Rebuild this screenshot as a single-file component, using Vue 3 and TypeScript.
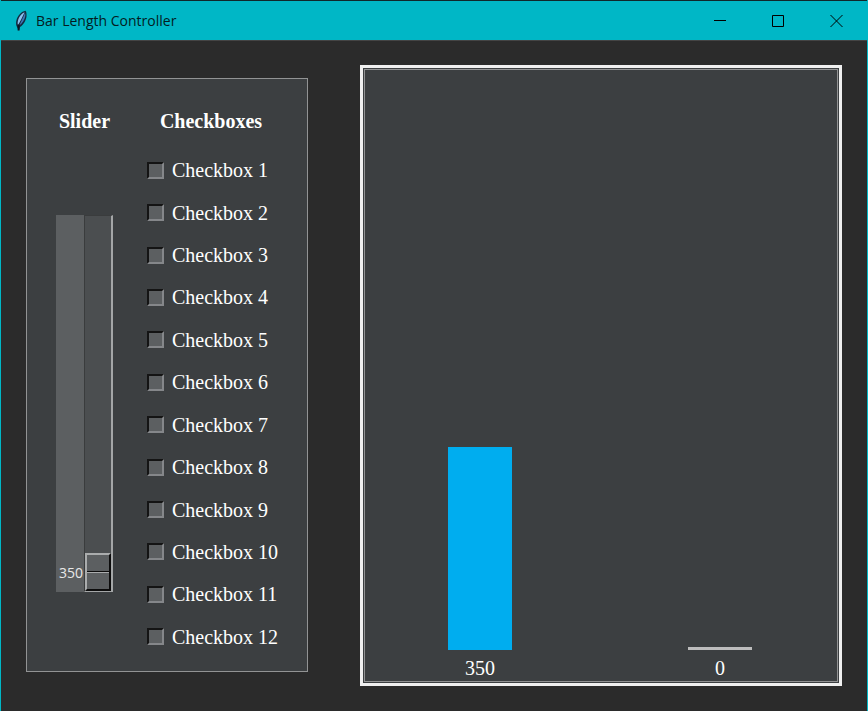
<script setup lang="ts">
import { computed, ref } from 'vue'

interface Option {
  id: number
  checked: boolean
}

const SCALE_MIN = 350
const SCALE_MAX = 1000

const level = ref<number>(350)
const options = ref<Option[]>(
  Array.from({ length: 12 }, (_, i) => ({ id: i + 1, checked: false })),
)

const checkedTotal = computed(() => options.value.filter((o) => o.checked).length * 50)

const bars = computed(() => [
  { name: 'level', value: Number(level.value), empty: Number(level.value) === 0 },
  { name: 'checked', value: checkedTotal.value, empty: checkedTotal.value === 0 },
])

const barHeight = (value: number): string => `${(value / SCALE_MAX) * 100}%`
</script>

<template>
  <div class="window">
    <header class="titlebar">
      <svg class="feather" viewBox="0 0 14 22" aria-hidden="true">
        <path d="M11.500 .8C7.500 1.500 3.800 5.500 2.500 10c-.8 3-.5 5 .5 7L4.800 20.500l1.200-3.500C9.500 15 12 10.500 12.500 6.500 12.700 4 12.500 2 11.500 .8z" fill="#122a40" />
        <path d="M10.600 2.300C7.500 3.500 4.800 7 3.900 11c-.4 1.700-.3 3 .1 4.300C6 12 8.200 7.500 10.600 2.300z" fill="#8cc0ee" />
        <path d="M10.900 2.800C9.200 7.500 7.200 11.500 5.200 15.500 8.300 13.500 10.500 10 11.200 6.500 11.500 5 11.400 4 10.900 2.800z" fill="#3f74b4" />
        <path d="M4.600 14.500V20.500" fill="none" stroke="#0b1622" stroke-width="2" />
      </svg>
      <h1 class="title">Bar Length Controller</h1>
      <div class="window-buttons">
        <button type="button" aria-label="Minimize">
          <svg viewBox="0 0 12 12" aria-hidden="true"><path d="M0 5.500H12" /></svg>
        </button>
        <button type="button" aria-label="Maximize">
          <svg viewBox="0 0 12 12" aria-hidden="true"><path d="M.5 .5H11.500V11.500H.5z" /></svg>
        </button>
        <button type="button" aria-label="Close">
          <svg viewBox="0 0 12 12" aria-hidden="true"><path d="M.5 0L12.500 12M12.500 0L.5 12" /></svg>
        </button>
      </div>
    </header>

    <main class="content">
      <section class="controls">
        <div class="slider-column">
          <label class="heading" for="level">Slider</label>
          <div class="scale">
            <output class="scale-value" for="level">{{ level }}</output>
            <input
              id="level"
              v-model.number="level"
              class="scale-input"
              type="range"
              :min="SCALE_MIN"
              :max="SCALE_MAX"
            />
          </div>
        </div>

        <div class="checkbox-column">
          <h2 class="heading">Checkboxes</h2>
          <div class="checkbox-list">
            <label v-for="option in options" :key="option.id" class="checkbox">
              <input v-model="option.checked" type="checkbox" />
              <span>Checkbox {{ option.id }}</span>
            </label>
          </div>
        </div>
      </section>

      <section class="chart">
        <div class="chart-area">
          <div v-for="bar in bars" :key="bar.name" class="bar-slot">
            <div class="bar-track">
              <div class="bar" :class="{ empty: bar.empty }" :style="{ height: barHeight(bar.value) }"></div>
            </div>
            <span class="bar-value">{{ bar.value }}</span>
          </div>
        </div>
      </section>
    </main>
  </div>
</template>

<style>
body {
  margin: 0;
  background: #2b2b2b;
}
</style>

<style scoped>
* {
  box-sizing: border-box;
}

.window {
  display: flex;
  flex-direction: column;
  min-height: 100vh;
  border: solid #00b7c6;
  border-width: 0 1px;
  background: #2b2b2b;
  color: #fff;
  font-family: "Liberation Serif", "Times New Roman", serif;
  font-size: 20px;
  line-height: 24px;
}

.titlebar {
  display: flex;
  align-items: center;
  height: 41px;
  padding: 0 2px 0 13px;
  border-top: 1px solid #10282b;
  border-bottom: 1px solid #444;
  background: #00b7c6;
  color: #041c1f;
}

.feather {
  width: 14px;
  height: 22px;
}

.title {
  margin: 0 auto 0 8px;
  font-family: "Open Sans", "Segoe UI", sans-serif;
  font-size: 14px;
  font-weight: 400;
  line-height: 20px;
}

.window-buttons {
  display: flex;
  align-self: stretch;
}

.window-buttons button {
  display: flex;
  align-items: center;
  justify-content: center;
  width: 58px;
  padding: 0;
  border: 0;
  background: none;
}

.window-buttons svg {
  width: 12px;
  height: 12px;
  overflow: visible;
  fill: none;
  stroke: #000;
  stroke-width: 1;
}

.content {
  display: grid;
  flex: 1;
  grid-template-columns: 282px 1fr;
  gap: 52px;
  padding: 24px 25px 25px;
}

.controls {
  display: flex;
  gap: 34px;
  margin: 13px 0 14px;
  padding: 30px 29px 13px;
  border: 1px solid #929394;
  background: #3c3f41;
}

.slider-column,
.checkbox-column {
  display: flex;
  flex: none;
  flex-direction: column;
}

.slider-column {
  width: 57px;
}

.checkbox-column {
  width: 128px;
}

.heading {
  margin: 0;
  font-size: 20px;
  font-weight: 700;
  line-height: 24px;
  text-align: center;
}

.scale {
  display: flex;
  flex: 1;
  margin: 82px 0 66px;
  background: #5c5f61;
}

.scale-value {
  align-self: flex-end;
  width: 28px;
  padding: 0 0 9px 2px;
  color: #e8e8e8;
  font-family: "Open Sans", "Segoe UI", sans-serif;
  font-size: 14px;
  line-height: 20px;
  text-align: center;
}

.scale-input {
  appearance: none;
  writing-mode: vertical-lr;
  direction: rtl;
  align-self: stretch;
  width: 29px;
  margin: 0;
  padding: 0;
  border: solid;
  border-width: 1px 2px 1px 1px;
  border-color: #3a3c3d #a4a6a7 #a4a6a7 #3a3c3d;
  background: #4b4e50;
}

.scale-input::-webkit-slider-thumb {
  appearance: none;
  width: 26px;
  height: 38px;
  border: 2px solid;
  border-color: #aaacad #0c0c0c #0c0c0c #aaacad;
  border-radius: 0;
  background: linear-gradient(#5c5f61 16px, #0c0c0c 16px, #0c0c0c 17px, #aaacad 17px, #aaacad 18px, #5c5f61 18px);
}

.checkbox-list {
  display: grid;
  flex: 1;
  grid-auto-rows: 1fr;
  margin-top: 16px;
}

.checkbox {
  display: flex;
  align-items: center;
  gap: 8px;
  white-space: nowrap;
}

.checkbox input {
  appearance: none;
  flex: none;
  width: 17px;
  height: 17px;
  margin: 0;
  border: 2px solid;
  border-color: #141414 #85878a #85878a #141414;
  background: #5c5f61;
}

.checkbox input:checked {
  background: #00adef;
}

.chart {
  display: flex;
  padding: 1px;
  border: 3px solid #f0f0f0;
  background: #3c3f41;
}

.chart-area {
  display: grid;
  flex: 1;
  grid-template-columns: 1fr 1fr;
  gap: 10px;
  padding-right: 2px;
  border: 1px solid #929394;
}

.bar-slot {
  display: flex;
  flex-direction: column;
  align-items: center;
}

.bar-track {
  display: flex;
  flex: 1;
  flex-direction: column;
  justify-content: flex-end;
  width: 64px;
}

.bar {
  min-height: 3px;
  background: #00adef;
}

.bar.empty {
  background: #bdbdbd;
}

.bar-value {
  padding: 6px 0 1px;
}
</style>
